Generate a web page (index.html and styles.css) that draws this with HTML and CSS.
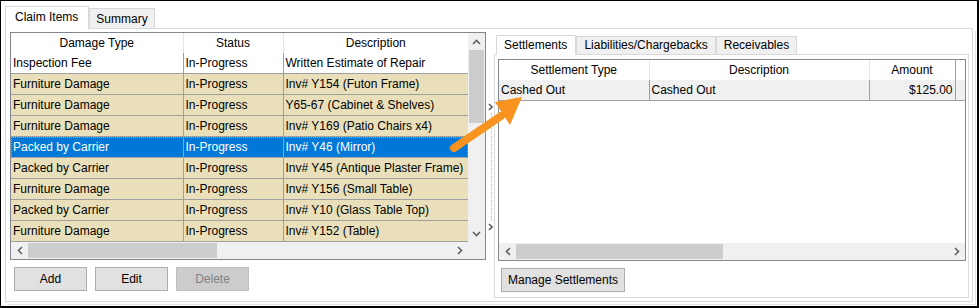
FILE: index.html
```html
<!DOCTYPE html>
<html lang="en">
<head>
    <meta charset="UTF-8">
    <title>Claim Items</title>
    <link rel="stylesheet" href="styles.css">
</head>
<body>
    <div class="window">
        <div class="tabs">
            <div class="tab active">Claim Items</div>
            <div class="tab">Summary</div>
        </div>
        <div class="panel">
            <div class="left">
                <div class="grid grid-left">
                    <div class="grid-main">
                        <div class="grid-body">
                            <table class="items">
                                <colgroup><col style="width:172px"><col style="width:100px"><col style="width:185px"></colgroup>
                                <tr class="head"><th>Damage Type</th><th>Status</th><th>Description</th></tr>
                                <tr class="plain"><td>Inspection Fee</td><td>In-Progress</td><td>Written Estimate of Repair</td></tr>
                                <tr><td>Furniture Damage</td><td>In-Progress</td><td>Inv# Y154 (Futon Frame)</td></tr>
                                <tr><td>Furniture Damage</td><td>In-Progress</td><td>Y65-67 (Cabinet &amp; Shelves)</td></tr>
                                <tr><td>Furniture Damage</td><td>In-Progress</td><td>Inv# Y169 (Patio Chairs x4)</td></tr>
                                <tr class="selected"><td>Packed by Carrier</td><td>In-Progress</td><td>Inv# Y46 (Mirror)</td></tr>
                                <tr><td>Packed by Carrier</td><td>In-Progress</td><td>Inv# Y45 (Antique Plaster Frame)</td></tr>
                                <tr><td>Furniture Damage</td><td>In-Progress</td><td>Inv# Y156 (Small Table)</td></tr>
                                <tr><td>Packed by Carrier</td><td>In-Progress</td><td>Inv# Y10 (Glass Table Top)</td></tr>
                                <tr><td>Furniture Damage</td><td>In-Progress</td><td>Inv# Y152 (Table)</td></tr>
                            </table>
                        </div>
                        <div class="vscroll">
                            <div class="sbtn"><svg width="9" height="6" viewBox="0 0 9 6"><polyline points="1,5 4.5,1.5 8,5" /></svg></div>
                            <div class="vtrack"><div class="vthumb"></div></div>
                            <div class="sbtn"><svg width="9" height="6" viewBox="0 0 9 6"><polyline points="1,1 4.5,4.5 8,1" /></svg></div>
                        </div>
                    </div>
                    <div class="hscroll">
                        <div class="sbtn"><svg width="6" height="9" viewBox="0 0 6 9"><polyline points="5,1 1.5,4.5 5,8" /></svg></div>
                        <div class="htrack"><div class="hthumb thumb-left"></div></div>
                        <div class="sbtn"><svg width="6" height="9" viewBox="0 0 6 9"><polyline points="1,1 4.5,4.5 1,8" /></svg></div>
                        <div class="corner"></div>
                    </div>
                </div>
                <div class="buttons">
                    <button class="button">Add</button>
                    <button class="button">Edit</button>
                    <button class="button disabled">Delete</button>
                </div>
            </div>

            <div class="splitter">
                <svg class="chev chev-top" width="5" height="8" viewBox="0 0 5 8"><polyline points="1,1 4,4 1,7" /></svg>
                <div class="dots"></div>
                <svg class="chev" width="5" height="8" viewBox="0 0 5 8"><polyline points="1,1 4,4 1,7" /></svg>
            </div>

            <div class="right">
                <div class="subtabs">
                    <div class="tab sub active">Settlements</div>
                    <div class="tab sub">Liabilities/Chargebacks</div>
                    <div class="tab sub">Receivables</div>
                </div>
                <div class="subpage">
                    <div class="grid grid-right">
                        <div class="grid-body">
                            <table class="settle">
                                <colgroup><col style="width:150px"><col style="width:220px"><col style="width:86px"><col></colgroup>
                                <tr class="head"><th>Settlement Type</th><th>Description</th><th>Amount</th><th></th></tr>
                                <tr><td>Cashed Out</td><td>Cashed Out</td><td class="num">$125.00</td><td></td></tr>
                            </table>
                        </div>
                        <div class="hscroll">
                            <div class="sbtn"><svg width="6" height="9" viewBox="0 0 6 9"><polyline points="5,1 1.5,4.5 5,8" /></svg></div>
                            <div class="htrack"><div class="hthumb thumb-right"></div></div>
                            <div class="sbtn"><svg width="6" height="9" viewBox="0 0 6 9"><polyline points="1,1 4.5,4.5 1,8" /></svg></div>
                        </div>
                    </div>
                    <button class="button manage">Manage Settlements</button>
                </div>
            </div>
        </div>

        <!-- callout arrow from the selected row to the settlement -->
        <svg class="arrow" width="90" height="70" viewBox="0 0 90 70">
            <line x1="9" y1="57" x2="56" y2="25" />
            <polygon points="77,6 50,11 65,34" />
        </svg>
    </div>
</body>
</html>
```

FILE: styles.css
```css
body {
    margin: 0;
    font-family: "Liberation Sans", Arial, sans-serif;
    font-size: 12px;
    color: #000;
}
.window {
    position: relative;
    width: 979px;
    height: 308px;
    box-sizing: border-box;
    border: 1px solid #000;
    border-right-width: 2px;
    border-bottom-width: 2px;
    background: #fff;
    padding: 4px 0 0 4px;
}
.tabs, .subtabs {
    display: flex;
    align-items: flex-end;
}
.tabs {
    height: 23px;
}
.tab {
    height: 20px;
    line-height: 20px;
    padding: 0 6px;
    border: 1px solid #d9d9d9;
    border-bottom: none;
    background: #f0f0f0;
    box-sizing: border-box;
}
.tab.active {
    height: 23px;
    line-height: 20px;
    padding: 0 10px 0 9px;
    background: #fff;
    margin-bottom: -1px;
    position: relative;
}
.panel {
    display: flex;
    width: 968px;
    height: 274px;
    box-sizing: border-box;
    border: 1px solid #d9d9d9;
    box-shadow: 2px 2px 0 #fff, 3px 3px 0 #e3e3e3;
}

/* left side */
.left {
    width: 480px;
    padding: 3px 0 0 4px;
    box-sizing: border-box;
}
.grid {
    border: 1px solid #828790;
    background: #fff;
    box-sizing: border-box;
    display: flex;
    flex-direction: column;
}
.grid-left {
    width: 476px;
    height: 228px;
}
.grid-main {
    display: flex;
    height: 209px;
}
.grid-body {
    flex: 1;
    overflow: hidden;
}
table {
    border-collapse: collapse;
    table-layout: fixed;
    width: 100%;
}
th {
    font-weight: normal;
    height: 20px;
    padding: 0;
    text-align: center;
    border-right: 1px solid #e5e5e5;
}
td {
    height: 20px;
    padding: 0 2px;
    white-space: nowrap;
    overflow: hidden;
    border-right: 1px solid #a0a0a0;
}
.items tr {
    background: #e9e0bb;
    border-bottom: 1px solid #a0a0a0;
}
.items tr.head, .items tr.plain {
    background: #fff;
}
.items tr.head {
    border-bottom: none;
}
.items td:last-child, .items th:last-child {
    border-right: none;
}
.items tr.selected {
    background: #0078d7;
    color: #fff;
    outline: 1px dotted #e89b3a;
    outline-offset: -1px;
}

/* scrollbars */
.vscroll {
    width: 17px;
    background: #f0f0f0;
    display: flex;
    flex-direction: column;
}
.sbtn {
    width: 17px;
    height: 17px;
    display: flex;
    align-items: center;
    justify-content: center;
    flex-shrink: 0;
}
.sbtn polyline, .chev polyline {
    fill: none;
    stroke: #606060;
    stroke-width: 1.6;
}
.vtrack {
    flex: 1;
}
.vthumb {
    margin: 0 1px;
    height: 73px;
    background: #cdcdcd;
}
.hscroll {
    height: 17px;
    display: flex;
    background: #f0f0f0;
}
.htrack {
    flex: 1;
    display: flex;
    align-items: center;
}
.hthumb {
    height: 15px;
    background: #cdcdcd;
}
.thumb-left {
    width: 189px;
}
.thumb-right {
    width: 207px;
}
.corner {
    width: 17px;
    background: #f0f0f0;
}

.buttons {
    display: flex;
    gap: 8px;
    padding: 7px 0 0 4px;
}
.button {
    font-family: inherit;
    font-size: 12px;
    width: 73px;
    height: 24px;
    padding: 0;
    background: #e1e1e1;
    border: 1px solid #adadad;
    color: #000;
}
.button.disabled {
    background: #cccccc;
    border-color: #bfbfbf;
    color: #838383;
}

/* splitter */
.splitter {
    width: 8px;
    display: flex;
    flex-direction: column;
    align-items: center;
    padding-top: 74px;
    box-sizing: border-box;
}
.chev-top {
    margin-bottom: 2px;
}
.dots {
    width: 0;
    height: 108px;
    border-left: 1px dotted #b8b8b8;
    margin-left: 2px;
    margin-bottom: 2px;
}

/* right side */
.right {
    width: 478px;
    padding-top: 5px;
    box-sizing: border-box;
}
.subtabs {
    height: 20px;
    padding-left: 2px;
}
.tab.sub {
    height: 18px;
    line-height: 17px;
    padding: 0 7px;
}
.tab.sub.active {
    height: 20px;
    line-height: 19px;
    padding: 0 8px 0 7px;
}
.subpage {
    width: 475px;
    height: 244px;
    box-sizing: border-box;
    border: 1px solid #d9d9d9;
    padding: 4px 0 0 3px;
}
.grid-right {
    width: 468px;
    height: 202px;
}
.grid-right .grid-body {
    height: 183px;
    flex: none;
}
.settle tr.head {
    background: #fff;
}
.settle tr:not(.head) {
    background: #f0f0f0;
    border-bottom: 1px solid #a0a0a0;
}
.settle th:nth-child(3) {
    border-right-color: #a0a0a0;
}
.settle th:last-child, .settle td:last-child {
    border-right: none;
}
.settle td.num {
    text-align: right;
}
.button.manage {
    width: 124px;
    margin: 7px 0 0 3px;
}

.arrow {
    position: absolute;
    left: 444px;
    top: 90px;
}
.arrow line {
    stroke: #f7931e;
    stroke-width: 8;
    stroke-linecap: round;
}
.arrow polygon {
    fill: #f7931e;
}
```
